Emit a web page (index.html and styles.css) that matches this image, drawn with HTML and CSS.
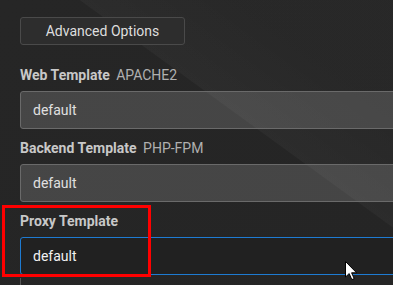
FILE: index.html
```html
<!DOCTYPE html>
<html lang="en">
<head>
    <meta charset="UTF-8">
    <meta name="viewport" content="width=device-width, initial-scale=1.0">
    <title>Edit Web Domain</title>
    <link rel="stylesheet" href="styles.css">
</head>
<body>
    <div class="page">
        <div class="form">
            <button class="adv-btn">Advanced Options</button>

            <div class="field">
                <label class="field-label">Web Template <span class="hint">APACHE2</span></label>
                <input class="field-input" type="text" value="default">
            </div>

            <div class="field">
                <label class="field-label">Backend Template <span class="hint">PHP-FPM</span></label>
                <input class="field-input" type="text" value="default">
            </div>

            <div class="field">
                <label class="field-label">Proxy Template</label>
                <input class="field-input focused" type="text" value="default">
                <div class="dropdown">
                    <div class="dropdown-item">hosting</div>
                    <div class="dropdown-item">caching</div>
                </div>
            </div>
        </div>

        <div class="highlight"></div>

        <svg class="cursor" width="13" height="20" viewBox="0 0 13 20">
            <path d="M0.5 0.5 L0.5 16 L4.2 12.6 L6.8 18.6 L9.2 17.6 L6.6 11.8 L11.6 11.8 Z" fill="#fff" stroke="#000" stroke-width="1"/>
        </svg>
    </div>
</body>
</html>
```

FILE: styles.css
```css
body {
    margin: 0;
    font-family: Roboto, "Liberation Sans", sans-serif;
    background: #242424;
}
.page {
    position: relative;
    height: 100vh;
    overflow: hidden;
    background:
        linear-gradient(36deg, rgba(255,255,255,0) 60%, rgba(255,255,255,0.03) 60.2%, rgba(255,255,255,0.012) 80%),
        linear-gradient(135deg, #262626 0%, #252525 100%);
}
.form {
    width: 430px;
    padding: 17px 0 0 20px;
}
.adv-btn {
    display: block;
    width: 165px;
    height: 28px;
    padding: 0;
    background: #2d2d2d;
    border: 1px solid #4a4a4a;
    border-radius: 3px;
    color: #dedede;
    font-family: inherit;
    font-size: 14px;
    margin-bottom: 20px;
}
.field {
    margin-bottom: 9px;
}
.field-label {
    display: block;
    height: 20px;
    line-height: 20px;
    margin-bottom: 6px;
    font-size: 14px;
    font-weight: 700;
    color: #c8c8c8;
}
.hint {
    font-weight: 400;
    font-size: 14px;
    line-height: 1;
    color: #b0b0b0;
    margin-left: 3px;
}
.field-input {
    display: block;
    box-sizing: border-box;
    width: 100%;
    height: 38px;
    padding: 0 12px;
    background: rgba(255,255,255,0.15);
    border: 1px solid #6a6a6a;
    border-radius: 3px;
    color: #e0e0e0;
    font-family: inherit;
    font-size: 14px;
    outline: none;
}
.field-input.focused {
    background: #212121;
    border-color: #1e7bd2;
    color: #f2f2f2;
}
.dropdown {
    margin-top: 3px;
    border-left: 1px solid #555;
    padding: 5px 0 0 26px;
}
.dropdown-item {
    font-size: 14px;
    line-height: 20px;
    color: #e6e6e6;
}
.highlight {
    position: absolute;
    left: 2px;
    top: 205px;
    width: 143px;
    height: 66px;
    border: 3px solid #ff0000;
}
.cursor {
    position: absolute;
    left: 345px;
    top: 261px;
}
```
